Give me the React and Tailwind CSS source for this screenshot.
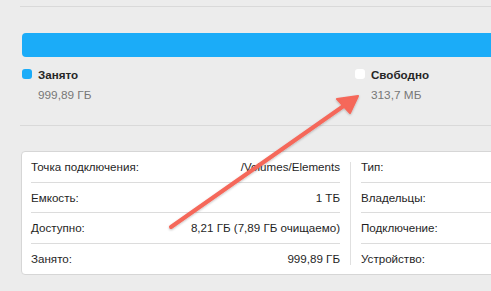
import React from "react";

const rowsL = [
  ["Точка подключения:", "/Volumes/Elements"],
  ["Емкость:", "1 ТБ"],
  ["Доступно:", "8,21 ГБ (7,89 ГБ очищаемо)"],
  ["Занято:", "999,89 ГБ"],
];
const rowsR = ["Тип:", "Владельцы:", "Подключение:", "Устройство:"];

export default function App() {
  return (
    <div
      className="relative w-[491px] h-[291px] overflow-hidden bg-[#ececec] text-[#1f1f1f]"
      style={{ fontFamily: '"Liberation Sans", Arial, sans-serif' }}
    >
      <div className="pt-[6px] pl-[20px]">
        <div className="h-px bg-[#d9d9d9]" />
      </div>
      <div className="mt-[26px] ml-[22px] h-[24px] rounded-l-[4px] bg-[#1bacf8]" />
      <div className="flex mt-[11px] ml-[22px] h-[46px]">
        <div className="flex gap-[6px] w-[333px]">
          <div className="mt-[1px] w-[10px] h-[10px] rounded-[3px] bg-[#1bacf8]" />
          <div className="flex flex-col">
            <span className="text-[11.6px] font-bold leading-[13px] text-[#262626]">Занято</span>
            <span className="mt-[8px] text-[11.8px] leading-[13px] text-[#777777]">999,89 ГБ</span>
          </div>
        </div>
        <div className="flex gap-[6px]">
          <div className="mt-[1px] w-[10px] h-[10px] rounded-[3px] bg-white" />
          <div className="flex flex-col">
            <span className="text-[11.6px] font-bold leading-[13px] text-[#262626]">Свободно</span>
            <span className="mt-[8px] text-[11.8px] leading-[13px] text-[#777777]">313,7 МБ</span>
          </div>
        </div>
      </div>
      <div className="mt-[11px] pl-[20px]">
        <div className="h-px bg-[#d9d9d9]" />
      </div>
      <div className="mt-[25px] ml-[21px] w-[500px] h-[124px] bg-white border border-[#d6d6d6] rounded-l-[4px] flex text-[11.6px]">
        <div className="ml-[9px] w-[309px] flex flex-col">
          {rowsL.map(([l, v], i) => (
            <div
              key={l}
              className={`h-[31px] flex items-center justify-between ${i < 3 ? "border-b border-[#dcdcdc]" : ""}`}
            >
              <span>{l}</span>
              <span>{v}</span>
            </div>
          ))}
        </div>
        <div className="mx-[10px] mt-[10px] mb-[9px] w-px bg-[#e0e0e0]" />
        <div className="flex-1 flex flex-col">
          {rowsR.map((l, i) => (
            <div
              key={l}
              className={`h-[31px] flex items-center ${i < 3 ? "border-b border-[#dcdcdc]" : ""}`}
            >
              <span>{l}</span>
            </div>
          ))}
        </div>
      </div>
      <svg
        className="absolute left-0 top-0 pointer-events-none"
        width="491"
        height="291"
        viewBox="0 0 491 291"
      >
        <defs>
          <filter id="sh" x="-20%" y="-20%" width="140%" height="140%">
            <feDropShadow dx="0" dy="1" stdDeviation="1" floodColor="#000" floodOpacity="0.25" />
          </filter>
        </defs>
        <g filter="url(#sh)">
          <line x1="171" y1="227" x2="345" y2="105" stroke="#f5675a" strokeWidth="4" strokeLinecap="round" />
          <polygon points="358,96 337,99 350,113" fill="#f5675a" stroke="#f5675a" strokeWidth="2" strokeLinejoin="round" />
        </g>
      </svg>
    </div>
  );
}
